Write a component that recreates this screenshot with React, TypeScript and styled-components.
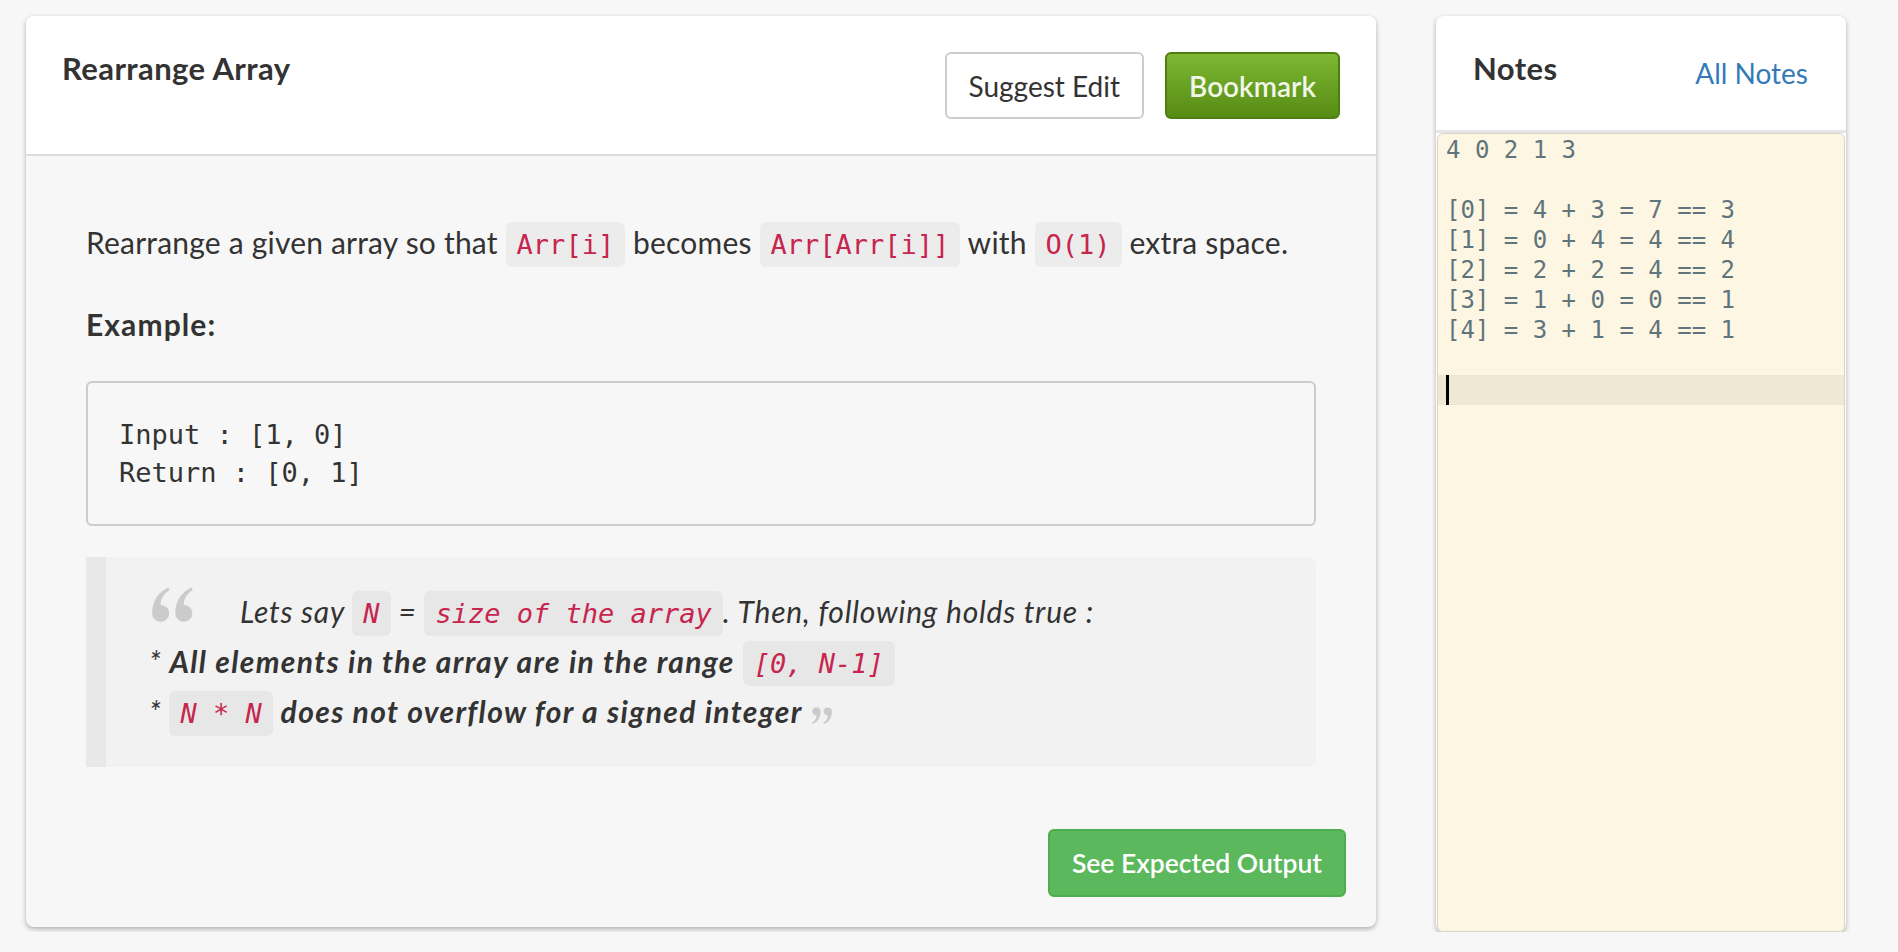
import React from 'react'
import styled, { createGlobalStyle } from 'styled-components'

const GlobalStyle = createGlobalStyle`
  html, body {
    margin: 0;
    background: #f7f7f7;
  }
  body {
    font-family: Lato, "Liberation Sans", sans-serif;
    color: #333;
  }
`

const Page = styled.div`
  display: flex;
  align-items: flex-start;
  gap: 60px;
  padding: 16px 0 0 26px;
`

const ProblemCard = styled.section`
  width: 1350px;
  background: #f7f7f7;
  border-radius: 8px;
  box-shadow: 0 2px 5px rgba(0, 0, 0, 0.3);
  overflow: hidden;
`

const CardHeader = styled.header`
  display: flex;
  justify-content: space-between;
  align-items: flex-start;
  height: 140px;
  box-sizing: border-box;
  padding: 36px 36px 0;
  background: #fff;
  border-bottom: 2px solid #ddd;
`

const Title = styled.h2`
  margin: 0;
  font-size: 31px;
  line-height: 32px;
  font-weight: 700;
  letter-spacing: 0.4px;
  color: #333;
`

const Actions = styled.div`
  display: flex;
  gap: 21px;
`

const Button = styled.button<{ $variant?: 'default' | 'bookmark' | 'success' }>`
  height: 67px;
  padding: 0 22px;
  border-radius: 6px;
  font-family: Lato, "Liberation Sans", sans-serif;
  font-size: 28px;
  cursor: pointer;
  ${({ $variant }) =>
    $variant === 'bookmark'
      ? `
    background: linear-gradient(#7db733, #578c14);
    border: 2px solid #4e7e10;
    color: #f1f6e8;
    font-weight: 600;
  `
      : $variant === 'success'
      ? `
    background: #5cb85c;
    border: 2px solid #4cae4c;
    color: #fff;
    font-weight: 600;
    font-size: 26.5px;
    height: 68px;
    padding: 0 22px;
  `
      : `
    background: #fff;
    border: 2px solid #ccc;
    color: #333;
    font-weight: 400;
  `}
`

const CardBody = styled.div`
  padding: 0 60px;
`

const Statement = styled.p`
  margin: 63px 0 0;
  font-size: 30px;
  line-height: 46px;
  letter-spacing: 0.2px;
`

const Code = styled.code`
  font-family: "DejaVu Sans Mono", monospace;
  font-size: 27px;
  font-weight: 400;
  line-height: 1;
  letter-spacing: 0;
  color: #c7254e;
  background: rgba(0, 0, 0, 0.045);
  border-radius: 6px;
  padding: 7px 11px;
`

const SectionTitle = styled.h4`
  margin: 39px 0 0;
  font-size: 30px;
  line-height: 40px;
  font-weight: 700;
  letter-spacing: 1.1px;
`

const Example = styled.pre`
  margin: 37px 0 0;
  padding: 33px 31px 32px;
  border: 2px solid #ccc;
  border-radius: 6px;
  background: #f7f7f7;
  font-family: "DejaVu Sans Mono", monospace;
  font-size: 27px;
  line-height: 38px;
  color: #333;
`

const Quote = styled.blockquote`
  margin: 31px 0 0;
  padding: 29px 30px 31px 43px;
  background: #f2f2f2;
  border-left: 20px solid #e8e8e8;
  border-radius: 0 8px 8px 0;
  font-size: 30px;
  line-height: 50px;
  font-style: italic;
  letter-spacing: 0.8px;

  strong {
    letter-spacing: 1.35px;
  }
`

const QuoteMark = styled.svg<{ $close?: boolean }>`
  fill: #cbcbcb;
  vertical-align: ${({ $close }) => ($close ? '-1px' : '1px')};
  margin: ${({ $close }) => ($close ? '0 0 0 9px' : '0 47px 0 3px')};
  transform: ${({ $close }) => ($close ? 'rotate(180deg)' : 'none')};
`

const Footer = styled.div`
  display: flex;
  justify-content: flex-end;
  padding: 62px 30px 30px;
`

const NotesCard = styled.aside`
  width: 410px;
  height: 916px;
  display: flex;
  flex-direction: column;
  background: #fff;
  border-radius: 8px;
  box-shadow: 0 2px 5px rgba(0, 0, 0, 0.3);
  overflow: hidden;
`

const NotesHeader = styled.div`
  display: flex;
  justify-content: space-between;
  align-items: flex-start;
  height: 117px;
  flex-shrink: 0;
  box-sizing: border-box;
  padding: 36px 38px 0 37px;
  border-bottom: 3px solid #e6e6e6;
`

const NotesLink = styled.a`
  margin-top: 5px;
  font-size: 28px;
  line-height: 32px;
  color: #337ab7;
  text-decoration: none;
`

const Editor = styled.div`
  flex: 1;
  margin: 0 1px;
  padding-top: 1px;
  border: 1px solid #d9d4c4;
  border-radius: 6px;
  background: #fdf6e3;
  font-family: "DejaVu Sans Mono", monospace;
  font-size: 24px;
  line-height: 30px;
  color: #5f747c;
`

const EditorLine = styled.div<{ $active?: boolean }>`
  height: 30px;
  padding-left: 8px;
  white-space: pre;
  background: ${({ $active }) => ($active ? '#eee8d5' : 'transparent')};
`

const Cursor = styled.span`
  display: inline-block;
  width: 3px;
  height: 30px;
  background: #000;
  vertical-align: top;
`

const quotePath =
  'M0 26C0 14 6 5 16 0.5L17.5 3C11 7 8.5 12 8.5 17.5A8.5 8.5 0 1 1 0 26Z'

const QuoteIcon = ({ close, size }: { close?: boolean; size: number }) => (
  <QuoteMark $close={close} width={size} height={size * 0.86} viewBox='0 0 40.5 35'>
    <path d={quotePath} />
    <path d={quotePath} transform='translate(23 0)' />
  </QuoteMark>
)

const noteLines = [
  '4 0 2 1 3',
  '',
  '[0] = 4 + 3 = 7 == 3',
  '[1] = 0 + 4 = 4 == 4',
  '[2] = 2 + 2 = 4 == 2',
  '[3] = 1 + 0 = 0 == 1',
  '[4] = 3 + 1 = 4 == 1',
  '',
]

const App = () => {
  return (
    <>
      <GlobalStyle />
      <Page>
        <ProblemCard>
          <CardHeader>
            <Title>Rearrange Array</Title>
            <Actions>
              <Button>Suggest Edit</Button>
              <Button $variant='bookmark'>Bookmark</Button>
            </Actions>
          </CardHeader>
          <CardBody>
            <Statement>
              Rearrange a given array so that <Code>Arr[i]</Code> becomes{' '}
              <Code>Arr[Arr[i]]</Code> with <Code>O(1)</Code> extra space.
            </Statement>
            <SectionTitle>Example:</SectionTitle>
            <Example>
              {'Input : [1, 0]\nReturn : [0, 1]'}
            </Example>
            <Quote>
              <QuoteIcon size={41} />
              Lets say <Code>N</Code> = <Code>size of the array</Code>. Then, following holds
              true :
              <br />
              * <strong>All elements in the array are in the range <Code>[0, N-1]</Code></strong>
              <br />
              * <Code>N * N</Code> <strong>does not overflow for a signed integer</strong>
              <QuoteIcon close size={20} />
            </Quote>
          </CardBody>
          <Footer>
            <Button $variant='success'>See Expected Output</Button>
          </Footer>
        </ProblemCard>
        <NotesCard>
          <NotesHeader>
            <Title>Notes</Title>
            <NotesLink href='#'>All Notes</NotesLink>
          </NotesHeader>
          <Editor>
            {noteLines.map((line, i) => (
              <EditorLine key={i}>{line}</EditorLine>
            ))}
            <EditorLine $active>
              <Cursor />
            </EditorLine>
          </Editor>
        </NotesCard>
      </Page>
    </>
  )
}

export default App
